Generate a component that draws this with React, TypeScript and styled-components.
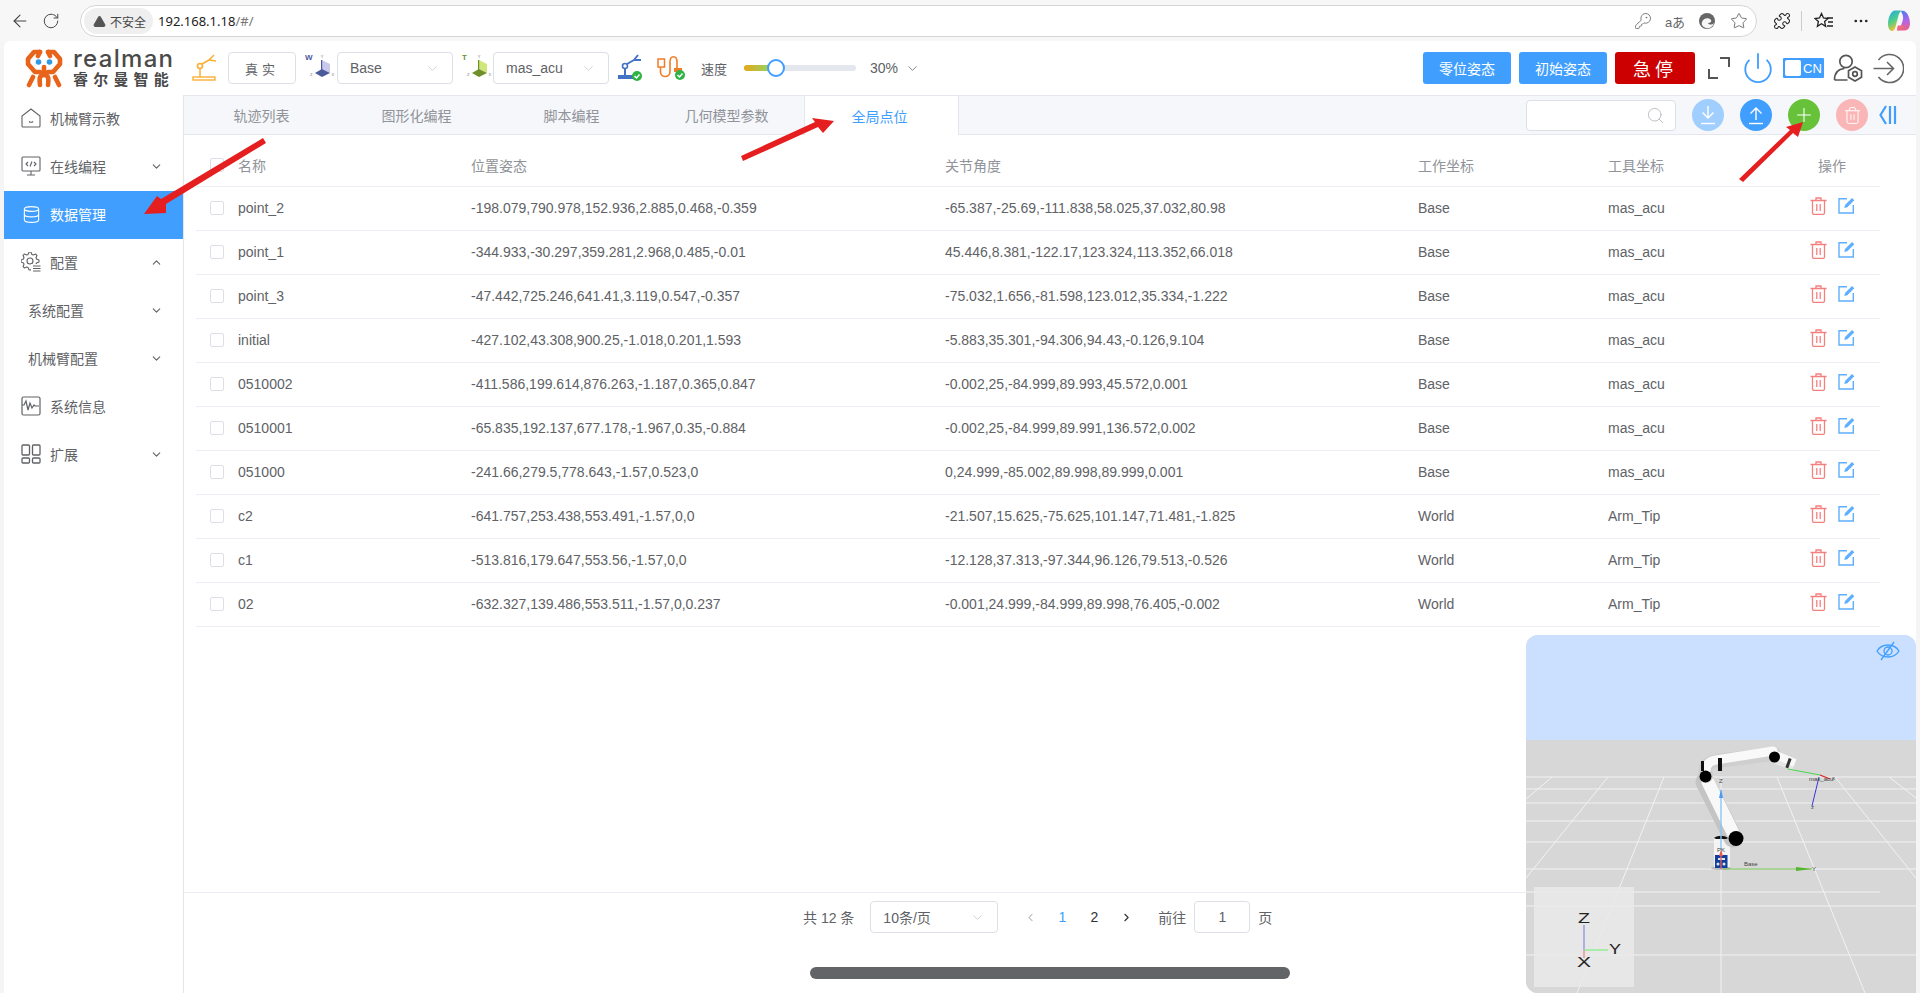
import React from "react";
import styled, { createGlobalStyle } from "styled-components";
import {
  ArrowLeft,
  ChevronDown,
  ChevronLeft,
  ChevronRight,
  ChevronUp,
  Database,
  KeyRound,
  MoreHorizontal,
  Plus,
  Power,
  Puzzle,
  RotateCw,
  Search,
  Star,
  Trash2,
  TriangleAlert,
} from "lucide-react";

const GlobalStyle = createGlobalStyle`
  html, body, #root {
    margin: 0;
    height: 100%;
  }
  body {
    overflow: hidden;
    background: #f5f5f5;
    font-family: "Liberation Sans", "Noto Sans CJK SC", sans-serif;
    font-size: 14px;
    color: #606266;
  }
  * { box-sizing: border-box; }
`;

const rows = [
  ["point_2", "-198.079,790.978,152.936,2.885,0.468,-0.359", "-65.387,-25.69,-111.838,58.025,37.032,80.98", "Base", "mas_acu"],
  ["point_1", "-344.933,-30.297,359.281,2.968,0.485,-0.01", "45.446,8.381,-122.17,123.324,113.352,66.018", "Base", "mas_acu"],
  ["point_3", "-47.442,725.246,641.41,3.119,0.547,-0.357", "-75.032,1.656,-81.598,123.012,35.334,-1.222", "Base", "mas_acu"],
  ["initial", "-427.102,43.308,900.25,-1.018,0.201,1.593", "-5.883,35.301,-94.306,94.43,-0.126,9.104", "Base", "mas_acu"],
  ["0510002", "-411.586,199.614,876.263,-1.187,0.365,0.847", "-0.002,25,-84.999,89.993,45.572,0.001", "Base", "mas_acu"],
  ["0510001", "-65.835,192.137,677.178,-1.967,0.35,-0.884", "-0.002,25,-84.999,89.991,136.572,0.002", "Base", "mas_acu"],
  ["051000", "-241.66,279.5,778.643,-1.57,0.523,0", "0,24.999,-85.002,89.998,89.999,0.001", "Base", "mas_acu"],
  ["c2", "-641.757,253.438,553.491,-1.57,0,0", "-21.507,15.625,-75.625,101.147,71.481,-1.825", "World", "Arm_Tip"],
  ["c1", "-513.816,179.647,553.56,-1.57,0,0", "-12.128,37.313,-97.344,96.126,79.513,-0.526", "World", "Arm_Tip"],
  ["02", "-632.327,139.486,553.511,-1.57,0,0.237", "-0.001,24.999,-84.999,89.998,76.405,-0.002", "World", "Arm_Tip"],
];

const tabs = ["轨迹列表", "图形化编程", "脚本编程", "几何模型参数", "全局点位"];

const Page = styled.div`
  position: relative;
  width: 1920px;
  height: 993px;
  overflow: hidden;
  display: flex;
  flex-direction: column;
`;

/* browser chrome */
const BrowserBar = styled.div`
  height: 41px;
  flex: none;
  display: flex;
  align-items: center;
  padding: 0 0 0 10px;
  background: #f7f7f7;
  color: #444;
`;
const NavButton = styled.div<{ $w: number }>`
  width: ${(p) => p.$w}px;
  flex: none;
  display: flex;
  align-items: center;
  justify-content: flex-start;
`;
const UrlPill = styled.div`
  width: 1677px;
  height: 32px;
  margin-top: 1px;
  flex: none;
  display: flex;
  align-items: center;
  background: #fff;
  border: 1px solid #d6d6d6;
  border-radius: 16px;
  padding: 0 8px 0 3px;
`;
const SecureChip = styled.div`
  height: 26px;
  padding: 0 7px 0 9px;
  display: flex;
  align-items: center;
  gap: 4px;
  border-radius: 13px;
  background: #efefef;
  font-size: 12px;
  color: #444;
`;
const UrlText = styled.span`
  margin-left: 5px;
  flex: 1;
  font-family: "Noto Sans", sans-serif;
  font-size: 13px;
  color: #222;
`;
const Muted = styled.span`
  color: #777;
`;
const PillIcons = styled.div`
  display: flex;
  align-items: center;
  gap: 14px;
  color: #666;
`;
const TranslateGlyph = styled.span`
  font-size: 13px;
  width: 18px;
  white-space: nowrap;
  display: flex;
  justify-content: center;
  color: #666;
`;
const ChromeIcons = styled.div`
  display: flex;
  align-items: center;
  margin-left: 16px;
  color: #222;
`;
const ChromeDivider = styled.div`
  width: 1px;
  height: 20px;
  background: #ccc;
  margin: 0 12px 0 10px;
`;
const ChromeGap = styled.div<{ $ml: number }>`
  display: flex;
  margin-left: ${(p) => p.$ml}px;
`;

/* app panel */
const Panel = styled.div`
  margin-left: 4px;
  width: 1912px;
  flex: 1;
  min-height: 0;
  display: flex;
  flex-direction: column;
  background: #fff;
  border-radius: 6px 6px 0 0;
`;
const Header = styled.div`
  height: 54px;
  flex: none;
  display: flex;
  align-items: center;
  padding-left: 21px;
`;
const Logo = styled.div`
  display: flex;
  align-items: center;
  gap: 10px;
  width: 167px;
  flex: none;
`;
const LogoText = styled.div`
  display: flex;
  flex-direction: column;
  width: 98px;
`;
const LogoLatin = styled.span`
  font-family: "Inter", sans-serif;
  font-weight: 500;
  font-size: 24px;
  line-height: 22px;
  letter-spacing: 1.3px;
  height: 22px;
  white-space: nowrap;
  color: #4a4a4a;
`;
const LogoCjk = styled.span`
  font-family: "Noto Sans CJK SC", sans-serif;
  font-weight: 700;
  font-size: 15px;
  line-height: 18px;
  letter-spacing: 5.2px;
  white-space: nowrap;
  color: #4a4a4a;
`;
const ModeButton = styled.div`
  width: 68px;
  height: 32px;
  margin-left: 6px;
  flex: none;
  display: flex;
  align-items: center;
  justify-content: center;
  border: 1px solid #dcdfe6;
  border-radius: 4px;
  font-size: 13px;
  letter-spacing: 4px;
  color: #606266;
`;
const SelectBox = styled.div<{ $w: number; $mx?: number }>`
  width: ${(p) => p.$w}px;
  height: 32px;
  margin: 0 ${(p) => p.$mx ?? 0}px;
  flex: none;
  display: flex;
  align-items: center;
  justify-content: space-between;
  padding: 0 12px;
  border: 1px solid #dcdfe6;
  border-radius: 4px;
  background: #fff;
  color: #606266;
  svg { color: #c0c4cc; }
`;
const HeaderIcon = styled.div<{ $ml: number }>`
  margin-left: ${(p) => p.$ml}px;
  flex: none;
  display: flex;
  align-items: center;
`;
const SpeedLabel = styled.span`
  margin-left: 14px;
  width: 43px;
  flex: none;
  font-size: 13px;
`;
const SliderTrack = styled.div`
  position: relative;
  width: 112px;
  height: 6px;
  flex: none;
  border-radius: 3px;
  background: #e4e7ed;
`;
const SliderFill = styled.div`
  height: 6px;
  width: 33px;
  border-radius: 3px 0 0 3px;
  background: linear-gradient(90deg, #e6a817, #7fe07a);
`;
const SliderThumb = styled.div`
  position: absolute;
  left: 23px;
  top: -6px;
  width: 18px;
  height: 18px;
  border-radius: 50%;
  background: #fff;
  border: 2px solid #409eff;
`;
const SpeedValue = styled.div`
  margin-left: 14px;
  width: 553px;
  flex: none;
  display: flex;
  align-items: center;
  gap: 7px;
  color: #606266;
`;
const ActionButton = styled.div<{ $danger?: boolean }>`
  width: ${(p) => (p.$danger ? 80 : 88)}px;
  height: 32px;
  margin-right: 8px;
  flex: none;
  display: flex;
  align-items: center;
  justify-content: center;
  border-radius: 3px;
  color: #fff;
  font-size: ${(p) => (p.$danger ? 18 : 14)}px;
  letter-spacing: ${(p) => (p.$danger ? 4 : 0)}px;
  background: ${(p) => (p.$danger ? "#cc0000" : "#409eff")};
`;
const LangToggle = styled.div`
  width: 41px;
  height: 20px;
  margin-left: 8px;
  flex: none;
  display: flex;
  align-items: center;
  padding-left: 2px;
  gap: 2px;
  background: #409eff;
  border-radius: 1px;
  color: #fff;
  font-size: 13px;
`;
const LangKnob = styled.div`
  width: 16px;
  height: 16px;
  background: #fff;
  border-radius: 2px;
`;

const Body = styled.div`
  flex: 1;
  min-height: 0;
  display: flex;
`;
const Sidebar = styled.div`
  width: 180px;
  flex: none;
  border-right: 1px solid #e6e6e6;
`;
const MenuItem = styled.div<{ $active?: boolean; $sub?: boolean }>`
  height: 48px;
  display: flex;
  align-items: center;
  padding-left: ${(p) => (p.$sub ? 24 : 17)}px;
  padding-right: 20px;
  padding-bottom: 2px;
  gap: 9px;
  font-size: 14px;
  color: ${(p) => (p.$active ? "#fff" : "#606266")};
  background: ${(p) => (p.$active ? "#409eff" : "transparent")};
`;
const MenuIcon = styled.div`
  width: 20px;
  height: 20px;
  flex: none;
  display: flex;
  align-items: center;
  justify-content: center;
`;
const MenuLabel = styled.span`
  flex: 1;
`;

const Main = styled.div`
  flex: 1;
  min-width: 0;
  display: flex;
  flex-direction: column;
`;
const TabBar = styled.div`
  height: 40px;
  flex: none;
  display: flex;
  align-items: stretch;
  background: #f5f7fa;
  border-top: 1px solid #e4e7ed;
  border-bottom: 1px solid #e4e7ed;
`;
const Tab = styled.div<{ $active?: boolean }>`
  width: 155px;
  flex: none;
  display: flex;
  align-items: center;
  justify-content: center;
  font-size: 14px;
  color: ${(p) => (p.$active ? "#409eff" : "#909399")};
  ${(p) =>
    p.$active
      ? `background: #fff;
         padding-right: 4px;
         border-left: 1px solid #e4e7ed;
         border-right: 1px solid #e4e7ed;
         margin-bottom: -1px;`
      : ""}
`;
const TabTools = styled.div`
  margin-left: auto;
  padding-right: 19px;
  display: flex;
  align-items: center;
`;
const SearchBox = styled.div`
  width: 150px;
  height: 31px;
  margin-right: 16px;
  display: flex;
  align-items: center;
  justify-content: flex-end;
  padding-right: 10px;
  background: #fff;
  border: 1px solid #dcdfe6;
  border-radius: 4px;
  color: #b4b7bd;
`;
const RoundButton = styled.div<{ $bg: string; $mr?: number }>`
  width: 32px;
  height: 32px;
  margin-right: ${(p) => p.$mr ?? 16}px;
  flex: none;
  border-radius: 50%;
  display: flex;
  align-items: center;
  justify-content: center;
  color: #fff;
  background: ${(p) => p.$bg};
`;

const TableWrap = styled.div`
  flex: 1;
  min-height: 0;
  padding: 10px 36px 0 12px;
`;
const Row = styled.div<{ $head?: boolean }>`
  height: ${(p) => (p.$head ? 42 : 44)}px;
  padding-bottom: 2px;
  display: grid;
  grid-template-columns: 42px 233px 474px 473px 190px 176px 1fr;
  align-items: center;
  border-bottom: 1px solid #ebeef5;
  color: ${(p) => (p.$head ? "#909399" : "#606266")};
  font-size: 14px;
`;
const CheckCell = styled.div`
  padding-left: 14px;
  display: flex;
`;
const CheckBox = styled.span`
  width: 14px;
  height: 14px;
  background: #fff;
  border: 1px solid #dcdfe6;
  border-radius: 2px;
`;
const ActionCell = styled.div`
  display: flex;
  justify-content: center;
  align-items: center;
  gap: 11px;
  margin-top: -4px;
`;
const HeadAction = styled.div`
  text-align: center;
`;

const Footer = styled.div`
  height: 101px;
  flex: none;
  border-top: 1px solid #ebeef5;
  padding-top: 8px;
  display: flex;
  align-items: flex-start;
  font-size: 14px;
`;
const Pager = styled.div`
  margin-left: 619px;
  height: 32px;
  display: flex;
  align-items: center;
  color: #606266;
`;
const PageNo = styled.span<{ $active?: boolean }>`
  width: 32px;
  text-align: center;
  font-size: 14px;
  color: ${(p) => (p.$active ? "#409eff" : "#303133")};
`;
const JumpLabel = styled.span`
  margin-left: 16px;
`;
const JumpInput = styled.div`
  width: 56px;
  height: 32px;
  margin: 0 8px;
  display: flex;
  align-items: center;
  justify-content: center;
  border: 1px solid #dcdfe6;
  border-radius: 4px;
`;
const PagerArrow = styled.div<{ $disabled?: boolean }>`
  width: 32px;
  display: flex;
  justify-content: center;
  color: ${(p) => (p.$disabled ? "#c0c4cc" : "#303133")};
`;

/* things that lie over the page */
const ScrollThumb = styled.div`
  position: absolute;
  left: 810px;
  top: 967px;
  width: 480px;
  height: 12px;
  border-radius: 6px;
  background: #636467;
`;
const Viewer = styled.div`
  position: absolute;
  left: 1526px;
  top: 635px;
  width: 390px;
  height: 358px;
  border-radius: 12px 12px 0 12px;
  overflow: hidden;
  background: #d7d7d7;
`;
const ViewerEye = styled.div`
  position: absolute;
  right: 16px;
  top: 6px;
  display: flex;
`;
const ArrowLayer = styled.svg`
  position: absolute;
  left: 0;
  top: 0;
  pointer-events: none;
`;

const LogoMark = () => (
  <svg width="38" height="39" viewBox="0 0 38 39" fill="none" stroke="#e8641b" strokeWidth="4.6" strokeLinejoin="round" strokeLinecap="round">
    <path d="M15 3H9L3 10V15L10 23H15" />
    <path d="M23 3H29L35 10V15L28 23H23" />
    <path d="M15 3L13 7M23 3L25 7" />
    <path d="M19 18V26" />
    <path d="M19 26C15 26 14 28 15 36M19 26C23 26 24 28 23 36" />
    <path d="M8 28L4 36M30 28L34 36" />
    <circle cx="13.500" cy="13" r="2.800" fill="#2f9be8" stroke="none" />
    <circle cx="24.500" cy="13" r="2.800" fill="#2f9be8" stroke="none" />
  </svg>
);

const ArmIcon = ({ color, ok }: { color: string; ok?: boolean }) => (
  <svg width="30" height="30" viewBox="0 0 30 30" fill="none">
    {ok ? (
      <rect x="0" y="22" width="15" height="4" fill={color} />
    ) : (
      <rect x="1" y="24" width="22" height="3" stroke={color} strokeWidth="1.400" />
    )}
    <path
      d={ok ? "M7 22v-7M9 11l7-4M16 7l4-5M16 7l7 0" : "M8 24v-9M10 11l7-4M17 7l5-5M17 7l7 1"}
      stroke={color}
      strokeWidth={ok ? 2 : 1.500}
    />
    <circle cx={ok ? 7 : 8} cy="13" r="2.500" stroke={color} strokeWidth="1.600" />
    {ok && <circle cx="19" cy="23" r="5" fill="#2fb344" />}
    {ok && <path d="M16.500 23l2 2 3-3.500" stroke="#fff" strokeWidth="1.500" />}
  </svg>
);

const CableIcon = () => (
  <svg width="30" height="30" viewBox="0 0 30 30" fill="none">
    <rect x="1" y="6" width="6.500" height="8" stroke="#f07c28" strokeWidth="1.500" />
    <path d="M3.500 14V19C3.500 25 13 25 13 19V9C13 2 20 2 20 9V15" stroke="#f07c28" strokeWidth="1.600" />
    <rect x="17" y="15" width="8" height="4" fill="#f07c28" />
    <circle cx="23" cy="22" r="5" fill="#2fb344" />
    <path d="M20.500 22l2 2 3-3.500" stroke="#fff" strokeWidth="1.500" />
  </svg>
);

const FrameIcon = ({ letter, plane, solid }: { letter: string; plane: string; solid: string }) => (
  <svg width="30" height="32" viewBox="0 0 30 32">
    <text x="0" y="8" fontSize="8" fontWeight="700" fontFamily="Liberation Sans" fill={solid}>
      {letter}
    </text>
    <path d="M17 8L25 12V21L17 17z" fill={plane} />
    <path d="M10 21L17 17L25 21L17 25z" fill={solid} />
    <path d="M16.600 8V18" stroke={solid} strokeWidth="1.200" />
    <g fontSize="4" fontFamily="Liberation Sans" fill="#777">
      <text x="15.800" y="6">Y</text>
      <text x="5" y="24">Z</text>
      <text x="26.500" y="24">X</text>
    </g>
  </svg>
);

const Expand = () => (
  <svg width="22" height="22" viewBox="0 0 22 22" fill="none" stroke="#555" strokeWidth="2">
    <path d="M12 1h9v9M1 12v9h9" />
  </svg>
);

const UserGear = () => (
  <svg width="30" height="28" viewBox="0 0 30 28" fill="none" stroke="#555" strokeWidth="1.700">
    <circle cx="13" cy="7.500" r="6.200" />
    <path d="M1.500 26c0-7 4-11 10-11.500M1.500 26h13" />
    <path d="M22 13l6.500 3.700v6.600L22 27l-6.500-3.700v-6.600z" />
    <circle cx="22" cy="20" r="2.300" />
  </svg>
);

const LogoutIcon = () => (
  <svg width="31" height="31" viewBox="0 0 31 31" fill="none" stroke="#666" strokeWidth="1.600">
    <path d="M5.500 7a14 14 0 1 1 0 17" />
    <path d="M0.500 15.500h20M14 9l6.500 6.500-6.500 6.500" />
  </svg>
);

const HomeIcon = () => (
  <svg width="20" height="20" viewBox="0 0 20 20" fill="none" stroke="#606266" strokeWidth="1.100">
    <path d="M10 1L1 8v10a1 1 0 0 0 1 1h16a1 1 0 0 0 1-1V8z" />
    <path d="M8 13.500c1 1 3 1 4 0" />
  </svg>
);

const MonitorCode = () => (
  <svg width="20" height="20" viewBox="0 0 20 20" fill="none" stroke="#606266" strokeWidth="1.100">
    <rect x="1" y="1" width="18" height="14" rx="1" />
    <path d="M6 19h8M10 15v4M7 6L5 8l2 2M13 6l2 2-2 2M11 5.500L9 10.500" />
  </svg>
);

// gear outline made of 8 teeth around (9,9)
const gearPoints = Array.from({ length: 32 }, (_, i) => {
  const a = ((i - 0.5) / 32) * Math.PI * 2;
  const r = i % 4 < 2 ? 9 : 6.8;
  return `${(9 + r * Math.cos(a)).toFixed(2)},${(9 + r * Math.sin(a)).toFixed(2)}`;
}).join(" ");

const GearList = () => (
  <svg width="20" height="20" viewBox="0 0 20 20" fill="none" stroke="#606266" strokeWidth="1.100">
    <polygon points={gearPoints} strokeLinejoin="round" />
    <circle cx="9" cy="9" r="3" />
    <rect x="10" y="12" width="10" height="8" fill="#fff" stroke="none" />
    <path d="M12 14h7.500M12 16.500h7.500M12 19h7.500" />
  </svg>
);

const PulseBox = () => (
  <svg width="20" height="20" viewBox="0 0 20 20" fill="none" stroke="#606266" strokeWidth="1.200">
    <rect x="1" y="1" width="18" height="18" rx="1.500" />
    <path d="M1 9h2l2-4 2 9 2-7 2 5 2-3 1 1h4" />
  </svg>
);

const BlocksIcon = () => (
  <svg width="20" height="20" viewBox="0 0 20 20" fill="none" stroke="#606266" strokeWidth="1.300">
    <rect x="1" y="1" width="7.500" height="10" rx="1" />
    <rect x="11.500" y="1" width="7.500" height="10" rx="1" />
    <rect x="1" y="14" width="7.500" height="5" rx="1" />
    <rect x="11.500" y="14" width="7.500" height="5" rx="1" />
  </svg>
);

const CollapseIcon = () => (
  <svg width="18" height="22" viewBox="0 0 18 22" fill="none" stroke="#409eff" strokeWidth="2.200">
    <path d="M7 2L1.500 11 7 20M11 2v18M16 2v18" />
  </svg>
);

const EdgeIcon = () => (
  <svg width="18" height="18" viewBox="0 0 18 18">
    <circle cx="9" cy="9" r="8" fill="#666" />
    <path d="M4 10c1-4 7-5 9-2 1 2-1 3-3 3 1 2 4 2 6 0-1 4-5 6-8 5-3-1-5-3-4-6z" fill="#f7f7f7" />
  </svg>
);

const FavoritesIcon = () => (
  <svg width="20" height="18" viewBox="0 0 20 18" fill="none" stroke="#222" strokeWidth="1.300">
    <path d="M7.500 1.500l2 4.500 4.500.5-3.400 3 1 4.800-4.100-2.500-4.100 2.500 1-4.800-3.400-3 4.500-.5z" />
    <path d="M13 6h6M14 10h5M13 14h6" />
  </svg>
);

const CopilotIcon = () => (
  <svg width="24" height="24" viewBox="0 0 24 24">
    <defs>
      <linearGradient id="cpa" x1="0" y1="0" x2="0.400" y2="1">
        <stop offset="0" stopColor="#1fa8e8" />
        <stop offset="0.55" stopColor="#4fce8a" />
        <stop offset="1" stopColor="#f2c230" />
      </linearGradient>
      <linearGradient id="cpb" x1="0.400" y1="0" x2="0.600" y2="1">
        <stop offset="0" stopColor="#4a7bf0" />
        <stop offset="0.55" stopColor="#b066e8" />
        <stop offset="1" stopColor="#f0608a" />
      </linearGradient>
    </defs>
    <path d="M8 1.500h7c-2 1-3 3-3.500 5L9 16c-1 4-2 6-4 6-3 0-4-4-4-7 0-6 3-13.500 7-13.500z" fill="url(#cpa)" />
    <path d="M14 2.500c1-1 3-1 4 0 3 2 5 7 5 12 0 4-2 7-5 7h-8c2-1 3-2.500 4-5l2-6c.5-3-.5-6-2-8z" fill="url(#cpb)" />
    <path d="M11 16.500h7c-1 2-2 5-8 5 0 0 0-3 1-5z" fill="#ee6a80" />
  </svg>
);

const ArrowBar = ({ up }: { up?: boolean }) => (
  <svg width="18" height="20" viewBox="0 0 18 20" fill="none" stroke="#fff" strokeWidth="1.400">
    <path d={up ? "M9 15V3M3.500 8.500L9 3l5.500 5.500" : "M9 1v12M3.500 7.500L9 13l5.500-5.500"} />
    <path d="M2 18.500h14" />
  </svg>
);

const RowTrash = () => (
  <svg width="17" height="18" viewBox="0 0 17 18" fill="none" stroke="#f47f7f" strokeWidth="1.300">
    <path d="M0.500 3.500h16M6 3.500V1h5v2.500M2.500 3.500v12.500a1.300 1.300 0 0 0 1.300 1.300h9.400a1.300 1.300 0 0 0 1.300-1.300V3.500M6.800 7v7M10.200 7v7" />
  </svg>
);

const RowEdit = () => (
  <svg width="17" height="17" viewBox="0 0 17 17" fill="none" stroke="#5faeff" strokeWidth="1.400">
    <path d="M9 1.700H1v14.300h14.300V8" />
    <path d="M14 1l2.300 2.300-7 7-3 .7.700-3z" fill="#5faeff" stroke="none" />
  </svg>
);

const EyeSlash = () => (
  <svg width="24" height="20" viewBox="0 0 24 20" fill="none" stroke="#409eff" strokeWidth="1.300">
    <path d="M1 10c5-8 17-8 22 0-5 8-17 8-22 0z" />
    <circle cx="12" cy="10" r="4" />
    <path d="M18 1L5 19" />
  </svg>
);

// 3d view: viewBox keeps the numbers of the reference crop divided by 3
const RobotScene = () => {
  const horizontals = [147, 159, 173, 191, 212, 239, 276, 325];
  const rays = [
    [32, 147, 6, 169],
    [88, 147, 6, 248],
    [144, 147, 57, 363],
    [201, 147, 201, 363],
    [257, 147, 345, 363],
    [315, 147, 396, 248],
    [369, 147, 396, 168],
  ];
  return (
    <svg width="390" height="358" viewBox="6 5 390 358">
      <rect x="6" y="5" width="390" height="105" fill="#cbe0fe" />
      <rect x="6" y="110" width="390" height="253" fill="#d7d7d7" />
      <g stroke="#f2f2f2" strokeWidth="1">
        {horizontals.map((y) => (
          <line key={y} x1="6" y1={y} x2="396" y2={y} />
        ))}
        <line x1="6" y1="262" x2="360" y2="262" />
        {rays.map(([a, b, c, d]) => (
          <line key={a} x1={a} y1={b} x2={c} y2={d} />
        ))}
      </g>
      <ellipse cx="201" cy="238" rx="10" ry="2" fill="#bdbdbd" />
      <path d="M194 208h16v29h-16z" fill="#f4f4f4" />
      <line x1="213" y1="208" x2="185" y2="152" stroke="#c4c4c4" strokeWidth="19" strokeLinecap="round" />
      <line x1="215" y1="207" x2="188" y2="152" stroke="#f8f8f8" strokeWidth="13" strokeLinecap="round" />
      <path d="M194 208c4-3 10-3 14 0l-2 1h-10z" fill="#111" />
      <path d="M186 146c-2-10 1-13 10-15l58-7" stroke="#cfcfcf" strokeWidth="14" fill="none" strokeLinecap="round" />
      <path d="M186 141c0-6 3-10 10-11l57-9" stroke="#f9f9f9" strokeWidth="9" fill="none" strokeLinecap="round" />
      <line x1="254" y1="127" x2="274" y2="135" stroke="#e6e6e6" strokeWidth="12" />
      <line x1="256" y1="125" x2="275" y2="133" stroke="#f8f8f8" strokeWidth="8" />
      <rect x="198" y="128" width="4" height="13" fill="#111" />
      <rect x="181" y="131" width="3" height="10" fill="#111" />
      <rect x="267" y="128" width="3" height="10" fill="#333" transform="rotate(20 268 133)" />
      <circle cx="216" cy="208.500" r="7.500" fill="#000" />
      <circle cx="185.500" cy="146.500" r="6" fill="#000" />
      <circle cx="254.500" cy="127" r="5.500" fill="#000" />
      <rect x="195" y="225" width="12.500" height="13" fill="#0f3f9e" />
      <rect x="198" y="228" width="7" height="2" fill="#e5e5e5" />
      <circle cx="198" cy="234" r="1.500" fill="#e5e5e5" />
      <circle cx="204" cy="234" r="1.500" fill="#e5e5e5" />
      <line x1="201" y1="220" x2="201" y2="160" stroke="#8fc4f7" strokeWidth="1.400" />
      <path d="M199 168l2-9 2 9z" fill="#4a9cf0" />
      <line x1="201" y1="239" x2="201" y2="222" stroke="#f06060" strokeWidth="1.300" />
      <path d="M199 226l2-6 2 6z" fill="#ee5555" />
      <line x1="203" y1="239" x2="292" y2="239" stroke="#6ec04a" strokeWidth="1" />
      <path d="M276 237l16 2-16 2z" fill="#55b52e" />
      <line x1="268" y1="139" x2="300" y2="145" stroke="#38d838" strokeWidth="0.900" />
      <line x1="300" y1="145" x2="310" y2="149" stroke="#e02020" strokeWidth="1.300" />
      <line x1="299" y1="147" x2="292" y2="176" stroke="#2525d8" strokeWidth="0.900" />
      <g fontFamily="Liberation Sans" fontSize="6" fill="#444">
        <text x="199" y="153">Z</text>
        <text x="292" y="241">Y</text>
        <text x="312" y="150">x</text>
        <text x="291" y="179">z</text>
        <text x="289" y="151">mas_acu</text>
        <text x="224" y="236">Base</text>
        <text x="197" y="222">PK</text>
      </g>
      <rect x="14" y="257" width="100" height="100" fill="#e9e9e9" fillOpacity="0.9" />
      <line x1="64" y1="295" x2="64" y2="320" stroke="#9a9ae8" strokeWidth="1.500" />
      <line x1="64" y1="320" x2="88" y2="320" stroke="#95ee95" strokeWidth="1.500" />
      <line x1="64" y1="320" x2="64" y2="328" stroke="#ee9595" strokeWidth="1.500" />
      <g fontFamily="Liberation Sans" fontSize="14" fill="#222">
        <text x="58" y="293" textLength="12" lengthAdjust="spacingAndGlyphs">Z</text>
        <text x="89" y="324" textLength="12" lengthAdjust="spacingAndGlyphs">Y</text>
        <text x="57" y="337" textLength="14" lengthAdjust="spacingAndGlyphs">X</text>
      </g>
    </svg>
  );
};

const RedArrow = ({ d }: { d: string }) => <path d={d} fill="#e51f1f" />;

const App: React.FC = () => {
  return (
    <Page>
      <GlobalStyle />
      <BrowserBar>
        <NavButton $w={32}>
          <ArrowLeft size={20} strokeWidth={1.3} />
        </NavButton>
        <NavButton $w={38}>
          <RotateCw size={18} strokeWidth={1.3} />
        </NavButton>
        <UrlPill>
          <SecureChip>
            <TriangleAlert size={13} fill="#555" stroke="#555" />
            不安全
          </SecureChip>
          <UrlText>
            192.168.1.18<Muted>/#/</Muted>
          </UrlText>
          <PillIcons>
            <KeyRound size={18} strokeWidth={1.1} />
            <TranslateGlyph>aあ</TranslateGlyph>
            <EdgeIcon />
            <Star size={18} strokeWidth={1.2} />
          </PillIcons>
        </UrlPill>
        <ChromeIcons>
          <Puzzle size={18} strokeWidth={1.4} />
          <ChromeDivider />
          <FavoritesIcon />
          <ChromeGap $ml={18}>
            <MoreHorizontal size={18} strokeWidth={1.6} />
          </ChromeGap>
          <ChromeGap $ml={17}>
            <CopilotIcon />
          </ChromeGap>
        </ChromeIcons>
      </BrowserBar>

      <Panel>
        <Header>
          <Logo>
            <LogoMark />
            <LogoText>
              <LogoLatin>realman</LogoLatin>
              <LogoCjk>睿尔曼智能</LogoCjk>
            </LogoText>
          </Logo>
          <ArmIcon color="#fbb034" />
          <ModeButton>真实</ModeButton>
          <HeaderIcon $ml={9}>
            <FrameIcon letter="W" plane="#c9c9ee" solid="#4a5a9a" />
          </HeaderIcon>
          <HeaderIcon $ml={2}>
            <SelectBox $w={116}>
              Base
              <ChevronDown size={15} strokeWidth={1.2} />
            </SelectBox>
          </HeaderIcon>
          <HeaderIcon $ml={9}>
            <FrameIcon letter="T" plane="#cfe67a" solid="#6f8f2a" />
          </HeaderIcon>
          <HeaderIcon $ml={1}>
            <SelectBox $w={116}>
              mas_acu
              <ChevronDown size={15} strokeWidth={1.2} />
            </SelectBox>
          </HeaderIcon>
          <HeaderIcon $ml={9}>
            <ArmIcon color="#4472c4" ok />
          </HeaderIcon>
          <HeaderIcon $ml={9}>
            <CableIcon />
          </HeaderIcon>
          <SpeedLabel>速度</SpeedLabel>
          <SliderTrack>
            <SliderFill />
            <SliderThumb />
          </SliderTrack>
          <SpeedValue>
            30%
            <ChevronDown size={15} strokeWidth={1.2} />
          </SpeedValue>
          <ActionButton>零位姿态</ActionButton>
          <ActionButton>初始姿态</ActionButton>
          <ActionButton $danger>急停</ActionButton>
          <HeaderIcon $ml={5}>
            <Expand />
          </HeaderIcon>
          <HeaderIcon $ml={11}>
            <Power size={34} color="#409eff" strokeWidth={1.3} />
          </HeaderIcon>
          <LangToggle>
            <LangKnob />
            CN
          </LangToggle>
          <HeaderIcon $ml={9}>
            <UserGear />
          </HeaderIcon>
          <HeaderIcon $ml={10}>
            <LogoutIcon />
          </HeaderIcon>
        </Header>

        <Body>
          <Sidebar>
            <MenuItem>
              <MenuIcon><HomeIcon /></MenuIcon>
              <MenuLabel>机械臂示教</MenuLabel>
            </MenuItem>
            <MenuItem>
              <MenuIcon><MonitorCode /></MenuIcon>
              <MenuLabel>在线编程</MenuLabel>
              <ChevronDown size={13} />
            </MenuItem>
            <MenuItem $active>
              <MenuIcon><Database size={19} strokeWidth={1.4} /></MenuIcon>
              <MenuLabel>数据管理</MenuLabel>
            </MenuItem>
            <MenuItem>
              <MenuIcon><GearList /></MenuIcon>
              <MenuLabel>配置</MenuLabel>
              <ChevronUp size={13} />
            </MenuItem>
            <MenuItem $sub>
              <MenuLabel>系统配置</MenuLabel>
              <ChevronDown size={13} />
            </MenuItem>
            <MenuItem $sub>
              <MenuLabel>机械臂配置</MenuLabel>
              <ChevronDown size={13} />
            </MenuItem>
            <MenuItem>
              <MenuIcon><PulseBox /></MenuIcon>
              <MenuLabel>系统信息</MenuLabel>
            </MenuItem>
            <MenuItem>
              <MenuIcon><BlocksIcon /></MenuIcon>
              <MenuLabel>扩展</MenuLabel>
              <ChevronDown size={13} />
            </MenuItem>
          </Sidebar>

          <Main>
            <TabBar>
              {tabs.map((t, i) => (
                <Tab key={t} $active={i === 4}>
                  {t}
                </Tab>
              ))}
              <TabTools>
                <SearchBox>
                  <Search size={19} strokeWidth={1.1} />
                </SearchBox>
                <RoundButton $bg="#a0cfff">
                  <ArrowBar />
                </RoundButton>
                <RoundButton $bg="#409eff">
                  <ArrowBar up />
                </RoundButton>
                <RoundButton $bg="#67c23a">
                  <Plus size={22} strokeWidth={1.2} />
                </RoundButton>
                <RoundButton $bg="#fab6b6" $mr={11}>
                  <Trash2 size={19} strokeWidth={1.2} />
                </RoundButton>
                <CollapseIcon />
              </TabTools>
            </TabBar>

            <TableWrap>
              <Row $head>
                <CheckCell><CheckBox /></CheckCell>
                <span>名称</span>
                <span>位置姿态</span>
                <span>关节角度</span>
                <span>工作坐标</span>
                <span>工具坐标</span>
                <HeadAction>操作</HeadAction>
              </Row>
              {rows.map((r) => (
                <Row key={r[0]}>
                  <CheckCell><CheckBox /></CheckCell>
                  {r.map((c) => (
                    <span key={c}>{c}</span>
                  ))}
                  <ActionCell>
                    <RowTrash />
                    <RowEdit />
                  </ActionCell>
                </Row>
              ))}
            </TableWrap>

            <Footer>
              <Pager>
                共 12 条
                <SelectBox $w={128} $mx={16}>
                  10条/页
                  <ChevronDown size={15} strokeWidth={1.2} />
                </SelectBox>
                <PagerArrow $disabled>
                  <ChevronLeft size={13} />
                </PagerArrow>
                <PageNo $active>1</PageNo>
                <PageNo>2</PageNo>
                <PagerArrow>
                  <ChevronRight size={13} />
                </PagerArrow>
                <JumpLabel>前往</JumpLabel>
                <JumpInput>1</JumpInput>
                页
              </Pager>
            </Footer>
          </Main>
        </Body>
      </Panel>

      <ScrollThumb />
      <Viewer>
        <RobotScene />
        <ViewerEye>
          <EyeSlash />
        </ViewerEye>
      </Viewer>

      <ArrowLayer width="1920" height="993" viewBox="0 0 1920 993">
        <RedArrow d="M263 138L266 143L166 204L166 213L144 214L157 196L161 199z" />
        <RedArrow d="M741 156L743 161L818 127L823 133L834 121L812 118L815 122z" />
        <RedArrow d="M1739 179L1743 182L1793 133L1798 137L1803 122L1786 127L1790 130z" />
      </ArrowLayer>
    </Page>
  );
};

export default App;
